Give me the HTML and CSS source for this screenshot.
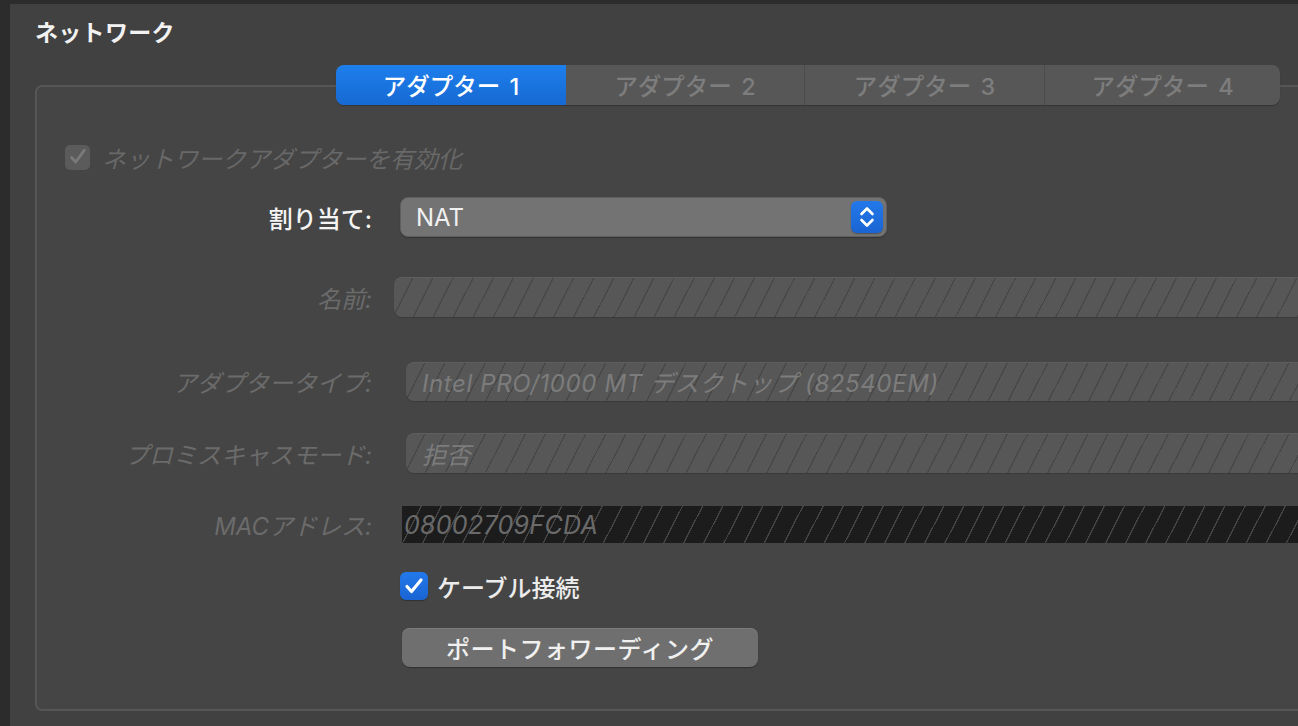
FILE: index.html
```html
<!DOCTYPE html>
<html lang="ja">
<head>
<meta charset="utf-8">
<title>ネットワーク</title>
<link rel="stylesheet" href="styles.css">
</head>
<body>
<div class="window">
  <h1 class="title">ネットワーク</h1>
  <div class="tabbar">
    <div class="tab active">アダプター 1</div>
    <div class="tab">アダプター 2</div>
    <div class="tab sep">アダプター 3</div>
    <div class="tab sep">アダプター 4</div>
  </div>
  <div class="groupbox">
    <div class="row row-enable">
      <span class="chk disabled">
        <svg viewBox="0 0 24 24" width="22" height="22"><path d="M5 12.5l4.5 5L19 4.5" fill="none" stroke="#7a7a7a" stroke-width="3" stroke-linecap="round" stroke-linejoin="round"/></svg>
      </span>
      <span class="dis-text">ネットワークアダプターを有効化</span>
    </div>

    <div class="row row-attach">
      <label class="lbl">割り当て:</label>
      <div class="select">
        <span class="select-value">NAT</span>
        <span class="stepper">
          <svg viewBox="0 0 32 32" width="32" height="32"><path d="M10.5 13l5.5-5.5 5.5 5.5M10.5 19l5.5 5.5 5.5-5.5" fill="none" stroke="#fff" stroke-width="2.6" stroke-linecap="round" stroke-linejoin="round"/></svg>
        </span>
      </div>
    </div>

    <div class="row row-name">
      <label class="lbl dis">名前:</label>
      <div class="field hatch f-name"></div>
    </div>

    <div class="row row-type">
      <label class="lbl dis">アダプタータイプ:</label>
      <div class="field hatch f-type"><span class="ftext">Intel PRO/1000 MT デスクトップ (82540EM)</span></div>
    </div>

    <div class="row row-prom">
      <label class="lbl dis">プロミスキャスモード:</label>
      <div class="field hatch f-prom"><span class="ftext">拒否</span></div>
    </div>

    <div class="row row-mac">
      <label class="lbl dis">MACアドレス:</label>
      <div class="field hatch-dark f-mac"><span class="ftext mac">08002709FCDA</span></div>
    </div>

    <div class="row row-cable">
      <span class="chk checked">
        <svg viewBox="0 0 28 28" width="28" height="28"><path d="M7 14.5l4.5 5L21 8" fill="none" stroke="#fff" stroke-width="3.2" stroke-linecap="round" stroke-linejoin="round"/></svg>
      </span>
      <span class="cable-text">ケーブル接続</span>
    </div>

    <div class="row row-btn">
      <button class="btn">ポートフォワーディング</button>
    </div>
  </div>
</div>
</body>
</html>
```

FILE: styles.css
```css
html, body {
  margin: 0;
  padding: 0;
  background: #2c2c2c;
  overflow: hidden;
  width: 1298px;
  height: 726px;
}

body {
  font-family: "Inter", "Noto Sans CJK JP", sans-serif;
  color: #e6e6e6;
}

.window {
  margin-left: 10px;
  margin-top: 4px;
  height: 722px;
  background: #414141;
  padding-left: 25px;
  box-sizing: border-box;
  overflow: hidden;
}

.title {
  margin: 0;
  padding-top: 14px;
  height: 47px;
  box-sizing: border-box;
  font-size: 23px;
  font-weight: 700;
  line-height: 30px;
  color: #f2f2f2;
  letter-spacing: 0.3px;
}

.tabbar {
  position: relative;
  z-index: 1;
  display: flex;
  width: 944px;
  height: 40px;
  margin-left: 301px;
  margin-top: 14px;
  margin-bottom: -20px;
  background: #575757;
  border-radius: 8px;
  box-shadow: 0 1px 1px rgba(0,0,0,0.25);
}

.tab {
  flex: 1;
  display: flex;
  align-items: center;
  justify-content: center;
  font-size: 23.5px;
  font-weight: 500;
  color: #7d7d7d;
  box-sizing: border-box;
  word-spacing: 3px;
}

.tab.sep {
  border-left: 1px solid #4b4b4b;
}

.tab.active {
  flex: 0 0 230px;
  background: linear-gradient(#1d7fec, #1769d3);
  color: #ffffff;
  border-radius: 8px 0 0 8px;
}

.tab:nth-child(2) { flex: 0 0 238px; }
.tab:nth-child(3) { flex: 0 0 240px; }

.groupbox {
  width: 1300px;
  height: 626px;
  border: 2px solid #565656;
  border-radius: 7px;
  background: #454545;
  box-sizing: border-box;
}

.row {
  display: flex;
  align-items: center;
}

.lbl {
  width: 335px;
  text-align: right;
  font-size: 24px;
  font-weight: 500;
  color: #f4f4f4;
  flex: none;
}

.lbl.dis {
  color: #6b6b6b;
  font-style: italic;
  font-weight: 400;
}

.row-enable {
  margin-top: 55px;
  height: 30px;
  padding-left: 28px;
}

.chk {
  display: flex;
  align-items: center;
  justify-content: center;
  box-sizing: border-box;
  flex: none;
}

.chk.disabled {
  width: 25px;
  height: 25px;
  background: #5b5b5b;
  border-radius: 5px;
}

.dis-text {
  margin-left: 12px;
  font-size: 24px;
  font-style: italic;
  color: #686868;
}

.row-attach {
  margin-top: 25px;
  height: 40px;
}

.select {
  margin-left: 28px;
  width: 487px;
  height: 40px;
  box-sizing: border-box;
  background: #737373;
  border: 1px solid #5f5f5f;
  border-radius: 8px;
  display: flex;
  align-items: center;
  justify-content: space-between;
  padding-left: 15px;
  padding-right: 3px;
  box-shadow: 0 1px 1px rgba(0,0,0,0.25);
}

.select-value {
  font-size: 24px;
  color: #f0f0f0;
}

.stepper {
  width: 32px;
  height: 32px;
  border-radius: 6px;
  background: linear-gradient(#2379ea, #1a64d3);
  display: flex;
  box-shadow: 0 1px 1px rgba(0,0,0,0.3);
}

.field {
  height: 40px;
  flex: 1;
  box-sizing: border-box;
  display: flex;
  align-items: center;
  overflow: hidden;
}

.hatch {
  background-color: #575757;
  background-image: repeating-linear-gradient(117deg, rgba(0,0,0,0) 0 16.6px, #474747 16.6px 17.9px);
  border-radius: 8px 0 0 8px;
  box-shadow: inset 0 1px 0 #5e5e5e, 0 1px 1px rgba(0,0,0,0.15);
}

.hatch-dark {
  background-color: #1c1c1c;
  background-image: repeating-linear-gradient(117deg, rgba(0,0,0,0) 0 16.6px, #444444 16.6px 17.9px);
}

.ftext {
  font-size: 24px;
  font-style: italic;
  color: #7c7c7c;
  padding-left: 16px;
  white-space: nowrap;
  letter-spacing: 0.6px;
}

.ftext.mac {
  padding-left: 2px;
  color: #6a6a6a;
  font-size: 25px;
  letter-spacing: 0.3px;
}

.row-name {
  margin-top: 40px;
}
.f-name { margin-left: 22px; }

.row-type {
  margin-top: 45px;
}
.f-type { margin-left: 34px; height: 39px; }

.row-prom {
  margin-top: 32px;
}
.f-prom { margin-left: 34px; }

.row-mac {
  margin-top: 33px;
}
.f-mac { margin-left: 30px; height: 37px; }

.row-cable {
  margin-top: 29px;
  padding-left: 363px;
  height: 28px;
}

.chk.checked {
  width: 28px;
  height: 28px;
  border-radius: 6px;
  background: linear-gradient(#2379ea, #1a64d3);
  box-shadow: 0 1px 1px rgba(0,0,0,0.3);
}

.cable-text {
  margin-left: 9px;
  font-size: 24px;
  font-weight: 500;
  color: #ececec;
}

.row-btn {
  margin-top: 28px;
  padding-left: 365px;
}

.btn {
  width: 356px;
  height: 39px;
  border: none;
  border-radius: 8px;
  background: #6f6f6f;
  color: #f0f0f0;
  font-family: "Inter", "Noto Sans CJK JP", sans-serif;
  font-size: 24px;
  font-weight: 500;
  letter-spacing: 0.5px;
  box-shadow: inset 0 1px 0 #7b7b7b, 0 1px 1px rgba(0,0,0,0.3);
  padding: 0;
}
```
